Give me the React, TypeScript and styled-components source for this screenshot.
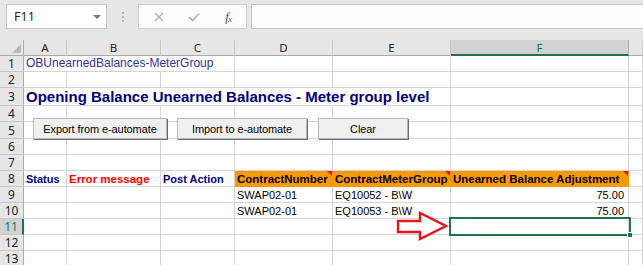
import React from "react";
import styled, { createGlobalStyle } from "styled-components";

const GREEN = "#217346";
const GRID = "#d4d4d4";
const HEAD_BG = "#e6e6e6";

const Global = createGlobalStyle`
  html, body { margin: 0; padding: 0; background: #fff; overflow: hidden; }
  body { font-family: "Liberation Sans", Arial, sans-serif; }
  * { box-sizing: border-box; }
`;

const Page = styled.div`
  width: 643px;
  height: 265px;
  overflow: hidden;
  background: #fff;
`;

/* ---------- formula bar ---------- */
const FormulaBar = styled.div`
  height: 40px;
  background: ${HEAD_BG};
  display: flex;
  align-items: flex-start;
  padding: 4px 0 0 6px;
`;

const NameBox = styled.div`
  width: 101px;
  height: 25px;
  background: #fff;
  border: 1px solid #c6c6c6;
  display: flex;
  align-items: center;
  justify-content: space-between;
  padding: 0 5px 0 7px;
  font-family: "Noto Sans", "Liberation Sans", sans-serif;
  font-size: 12.5px;
  color: #262626;
`;

const DropArrow = styled.span`
  width: 0;
  height: 0;
  border-left: 4px solid transparent;
  border-right: 4px solid transparent;
  border-top: 4px solid #777;
  margin-top: 1px;
`;

const Grip = styled.div`
  width: 31px;
  height: 25px;
  display: flex;
  flex-direction: column;
  align-items: center;
  justify-content: center;
  gap: 2px;
  span {
    width: 2px;
    height: 2px;
    background: #b4b4b4;
  }
`;

const FxBox = styled.div`
  width: 109px;
  height: 25px;
  background: #fdfdfd;
  border: 1px solid #d0d0d0;
  display: flex;
  align-items: center;
  padding-left: 2px;
`;

const FxSlot = styled.div`
  width: 35px;
  display: flex;
  justify-content: center;
  align-items: center;
`;

const FxText = styled.span`
  font-family: "Liberation Serif", "DejaVu Serif", serif;
  font-style: italic;
  font-size: 13px;
  color: #555;
  letter-spacing: -0.5px;
  sub {
    font-size: 9px;
    vertical-align: -1px;
  }
`;

const FormulaInput = styled.div`
  flex: 1;
  height: 25px;
  margin-left: 4px;
  background: #fdfdfd;
  border: 1px solid #c6c6c6;
  border-right: none;
`;

/* ---------- sheet ---------- */
const Sheet = styled.div`
  position: relative;
  display: grid;
  grid-template-columns: 24px 43px 94px 74px 98px 118px 178px 1fr;
  grid-template-rows: 16px 16px 16px 18px 16px 17px 16px 16px 16px 16px 16px 16px 16px 16px;
`;

const Corner = styled.div`
  background: ${HEAD_BG};
  border-right: 1px solid #ababab;
  border-bottom: 1px solid #ababab;
  position: relative;
  &::after {
    content: "";
    position: absolute;
    right: 2px;
    bottom: 2px;
    width: 0;
    height: 0;
    border-left: 9px solid transparent;
    border-bottom: 9px solid #b9b9b9;
  }
`;

const ColHead = styled.div<{ $selected?: boolean }>`
  background: ${(p) => (p.$selected ? "#d2d2d2" : HEAD_BG)};
  border-right: 1px solid ${(p) => (p.$selected ? "#ababab" : "#c8c8c8")};
  border-bottom: ${(p) => (p.$selected ? `2px solid ${GREEN}` : "1px solid #ababab")};
  color: ${(p) => (p.$selected ? GREEN : "#222")};
  font-family: "Noto Sans", "Liberation Sans", sans-serif;
  font-size: 11.5px;
  display: flex;
  align-items: center;
  justify-content: center;
  line-height: 1;
  padding-top: 1px;
`;

const RowHead = styled.div<{ $selected?: boolean }>`
  background: ${(p) => (p.$selected ? "#d2d2d2" : HEAD_BG)};
  border-right: ${(p) => (p.$selected ? `2px solid ${GREEN}` : "1px solid #ababab")};
  border-bottom: 1px solid #c8c8c8;
  color: ${(p) => (p.$selected ? GREEN : "#222")};
  font-family: "Noto Sans", "Liberation Sans", sans-serif;
  font-size: 12px;
  display: flex;
  align-items: center;
  justify-content: center;
  line-height: 1;
  padding-top: 1px;
`;

type CellProps = {
  $span?: number;
  $bg?: string;
  $color?: string;
  $bold?: boolean;
  $size?: number;
  $align?: "left" | "right";
};

const Cell = styled.div<CellProps>`
  grid-column: span ${(p) => p.$span ?? 1};
  position: relative;
  background: ${(p) => p.$bg ?? "#fff"};
  border-right: 1px solid ${(p) => p.$bg ?? GRID};
  border-bottom: 1px solid ${(p) => p.$bg ?? GRID};
  color: ${(p) => p.$color ?? "#000"};
  font-weight: ${(p) => (p.$bold ? 700 : 400)};
  font-size: ${(p) => p.$size ?? 11}px;
  display: flex;
  align-items: flex-end;
  justify-content: ${(p) => (p.$align === "right" ? "flex-end" : "flex-start")};
  padding: 0 4px 0 2px;
  line-height: 1.15;
  white-space: nowrap;
  overflow: hidden;
`;

const CommentMark = styled.span`
  position: absolute;
  top: 0;
  right: 0;
  width: 0;
  height: 0;
  border-left: 5px solid transparent;
  border-top: 5px solid #ff0000;
`;

const Selection = styled.div`
  position: absolute;
  left: -2px;
  top: -2px;
  right: -3px;
  bottom: -2px;
  border: 2px solid ${GREEN};
  pointer-events: none;
`;

const FillHandle = styled.span`
  position: absolute;
  right: -4px;
  bottom: -4px;
  width: 6px;
  height: 6px;
  background: ${GREEN};
  border: 1px solid #fff;
`;

/* ---------- overlays ---------- */
const ButtonBar = styled.div`
  position: absolute;
  left: 33px;
  top: 78px;
  display: flex;
  gap: 10px;
`;

const SheetButton = styled.button<{ $w: number }>`
  width: ${(p) => p.$w}px;
  height: 21px;
  background: #f0f0f0;
  border: 1px solid #b8b8b8;
  box-shadow: 1px 1px 0 #6a6a6a;
  font-family: "Liberation Sans", Arial, sans-serif;
  font-size: 11px;
  color: #000;
  padding: 0;
  display: flex;
  align-items: center;
  justify-content: center;
  letter-spacing: -0.1px;
`;

const Arrow = styled.svg`
  position: absolute;
  left: 396px;
  top: 171px;
`;

const cols = ["A", "B", "C", "D", "E", "F", ""];

const Blank = ({ n }: { n: number }) => (
  <>
    {Array.from({ length: n }).map((_, i) => (
      <Cell key={i} />
    ))}
  </>
);

export default function App() {
  return (
    <Page>
      <Global />
      <FormulaBar>
        <NameBox>
          <span>F11</span>
          <DropArrow />
        </NameBox>
        <Grip>
          <span />
          <span />
          <span />
        </Grip>
        <FxBox>
          <FxSlot>
            <svg width="10" height="10" viewBox="0 0 10 10">
              <path d="M1 1 L9 9 M9 1 L1 9" stroke="#b0b0b0" strokeWidth="1.3" fill="none" />
            </svg>
          </FxSlot>
          <FxSlot>
            <svg width="12" height="10" viewBox="0 0 12 10">
              <path d="M1 5 L4.5 8.5 L11 1.5" stroke="#b0b0b0" strokeWidth="1.6" fill="none" />
            </svg>
          </FxSlot>
          <FxSlot>
            <FxText>
              f<sub>x</sub>
            </FxText>
          </FxSlot>
        </FxBox>
        <FormulaInput />
      </FormulaBar>

      <Sheet>
        <Corner />
        {cols.map((c, i) => (
          <ColHead key={i} $selected={c === "F"}>
            {c}
          </ColHead>
        ))}

        {/* row 1 */}
        <RowHead>1</RowHead>
        <Cell $span={3} $color="#333399" $size={12}>
          OBUnearnedBalances-MeterGroup
        </Cell>
        <Blank n={4} />

        {/* row 2 */}
        <RowHead>2</RowHead>
        <Blank n={7} />

        {/* row 3 */}
        <RowHead>3</RowHead>
        <Cell $span={5} $color="#000080" $bold $size={15}>
          Opening Balance Unearned Balances - Meter group level
        </Cell>
        <Blank n={2} />

        {/* row 4 */}
        <RowHead>4</RowHead>
        <Blank n={7} />

        {/* row 5 */}
        <RowHead>5</RowHead>
        <Blank n={7} />

        {/* row 6 */}
        <RowHead>6</RowHead>
        <Blank n={7} />

        {/* row 7 */}
        <RowHead>7</RowHead>
        <Blank n={7} />

        {/* row 8 */}
        <RowHead>8</RowHead>
        <Cell $color="#000080" $bold>
          Status
        </Cell>
        <Cell $color="#ff0000" $bold $size={11.5}>
          Error message
        </Cell>
        <Cell $color="#000080" $bold>
          Post Action
        </Cell>
        <Cell $bg="#ff9900" $bold $size={11.5}>
          ContractNumber
          <CommentMark />
        </Cell>
        <Cell $bg="#ff9900" $bold $size={11.5}>
          ContractMeterGroup
          <CommentMark />
        </Cell>
        <Cell $bg="#ff9900" $bold $size={11.5}>
          Unearned Balance Adjustment
          <CommentMark />
        </Cell>
        <Cell />

        {/* row 9 */}
        <RowHead>9</RowHead>
        <Blank n={3} />
        <Cell>SWAP02-01</Cell>
        <Cell>EQ10052 - B\W</Cell>
        <Cell $align="right">75.00</Cell>
        <Cell />

        {/* row 10 */}
        <RowHead>10</RowHead>
        <Blank n={3} />
        <Cell>SWAP02-01</Cell>
        <Cell>EQ10053 - B\W</Cell>
        <Cell $align="right">75.00</Cell>
        <Cell />

        {/* row 11 */}
        <RowHead $selected>11</RowHead>
        <Blank n={5} />
        <Cell style={{ overflow: "visible", zIndex: 2 }}>
          <Selection>
            <FillHandle />
          </Selection>
        </Cell>
        <Cell />

        {/* row 12 */}
        <RowHead>12</RowHead>
        <Blank n={7} />

        {/* row 13 */}
        <RowHead>13</RowHead>
        <Blank n={7} />

        <ButtonBar>
          <SheetButton $w={134}>Export from e-automate</SheetButton>
          <SheetButton $w={130}>Import to e-automate</SheetButton>
          <SheetButton $w={90} style={{ marginLeft: 1 }}>
            Clear
          </SheetButton>
        </ButtonBar>

        <Arrow width="54" height="31" viewBox="0 0 54 31">
          <polygon
            points="2,10 24,10 24,2 50,15 24,28 24,21 2,21"
            fill="#fff"
            stroke="#e8161b"
            strokeWidth="2.4"
            strokeLinejoin="miter"
          />
        </Arrow>
      </Sheet>
    </Page>
  );
}
